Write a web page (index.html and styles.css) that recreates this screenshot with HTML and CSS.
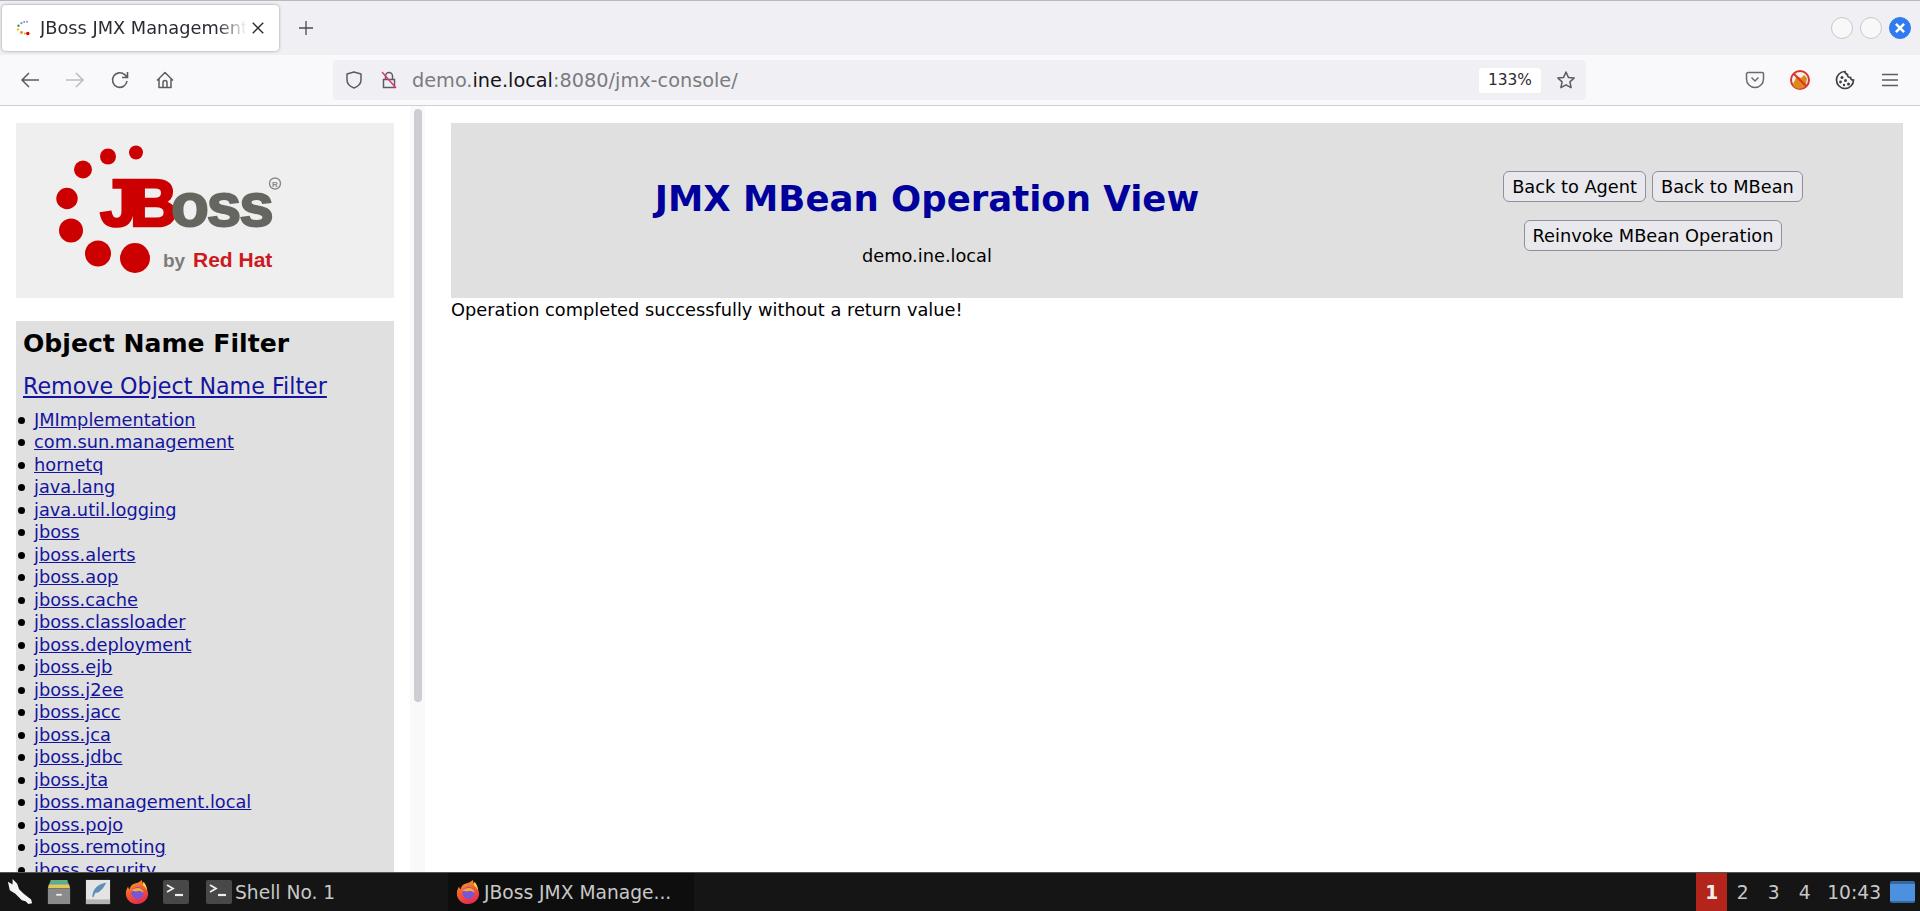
FILE: index.html
```html
<!DOCTYPE html>
<html lang="en">
<head>
<meta charset="utf-8">
<title>JBoss JMX Management Console</title>
<link rel="stylesheet" href="styles.css">
</head>
<body>
<svg class="defs" width="0" height="0" aria-hidden="true">
  <defs>
    <linearGradient id="fxbody" x1="0" y1="0" x2="0.4" y2="1"><stop offset="0" stop-color="#ffb22e"/><stop offset="0.5" stop-color="#f5602b"/><stop offset="1" stop-color="#e8304e"/></linearGradient>
    <symbol id="firefox" viewBox="0 0 28 28">
      <path d="M19 1c1.500 3 1 5 3 7 2.500 2.500 4 5 4 8 0 6-5.500 11-12 11S2 22 2 15.500c0-3 1-5.500 2.500-7.500 0 1.500.5 2.500 1.500 3 .5-3 2.500-5 5-6 2.500-.5 5-1 8-4z" fill="url(#fxbody)"/>
      <circle cx="14.500" cy="15" r="6.500" fill="#7a55d6"/>
      <path d="M8 13c2-3 6-4 9-3 2.500 1 4 3 4 5-2-2-4-2.500-6-2-2 .5-3 .5-4.500 0z" fill="#ffa52e"/>
      <path d="M21 3c2 2 4 6 4 10-1.500-3-3-5-5-6.500z" fill="#ffd53a"/>
    </symbol>
    <symbol id="terminal" viewBox="0 0 26 24">
      <rect x="0" y="0" width="26" height="24" rx="2" fill="#484848"/>
      <path d="M4 5l6 3.500-6 3.500" stroke="#eee" stroke-width="1.800" fill="none"/>
      <path d="M12 15h8" stroke="#eee" stroke-width="2.200"/>
    </symbol>
  </defs>
</svg>
<div class="tabbar">
  <div class="tab">
    <svg class="favicon" viewBox="0 0 16 16"><circle cx="12" cy="1.800" r="1" fill="#a67cc9"/><circle cx="9.200" cy="2" r="1" fill="#7f8fd0"/><circle cx="6.500" cy="3.200" r="1.100" fill="#5aa0c8"/><circle cx="3.500" cy="5.800" r="1.200" fill="#3e9a5a"/><circle cx="3" cy="9.500" r="1.300" fill="#ecc820"/><circle cx="6.500" cy="12.500" r="1.400" fill="#e88a20"/><circle cx="9.800" cy="13.500" r="1" fill="#e8a020"/><circle cx="12.800" cy="13.500" r="1.700" fill="#cc0000"/></svg>
    <span class="tab-title">JBoss JMX Management Console</span>
    <svg class="tab-close" viewBox="0 0 12 12"><path d="M1.500 1.500l9 9M10.500 1.500l-9 9" stroke="#2b2a33" stroke-width="1.200" fill="none"/></svg>
  </div>
  <svg class="newtab" viewBox="0 0 16 16"><path d="M8 1v14M1 8h14" stroke="#4a4952" stroke-width="1.300" fill="none"/></svg>
  <div class="winbtns">
    <span class="winbtn"></span>
    <span class="winbtn"></span>
    <span class="winbtn active"><svg viewBox="0 0 12 12"><path d="M2.500 2.500l7 7M9.500 2.500l-7 7" stroke="#fff" stroke-width="2.200" fill="none"/></svg></span>
  </div>
</div>
<div class="toolbar">
  <svg class="tbicon first" viewBox="0 0 20 20"><path d="M19 10H2M9 3l-7 7 7 7" stroke="#5b5b63" stroke-width="1.500" fill="none"/></svg>
  <svg class="tbicon" viewBox="0 0 20 20"><path d="M1 10h17M11 3l7 7-7 7" stroke="#bcbcc2" stroke-width="1.500" fill="none"/></svg>
  <svg class="tbicon" viewBox="0 0 20 20"><path d="M17 11a7.300 7.300 0 1 1-2.300-6.300L17.500 7.500M17.500 2v5.500H12" stroke="#5b5b63" stroke-width="1.600" fill="none"/></svg>
  <svg class="tbicon" viewBox="0 0 20 20"><path d="M2 10.500L10 2.500l8 8M4 9v8.500h12V9M8 17.500v-5a2 2 0 0 1 4 0v5" stroke="#5b5b63" stroke-width="1.500" fill="none" stroke-linejoin="round"/></svg>
  <div class="urlbar">
    <svg class="urlicon" viewBox="0 0 20 20"><path d="M10 2l7 2v6c0 4-3 6.500-7 8-4-1.500-7-4-7-8V4z" stroke="#5b5b63" stroke-width="1.500" fill="none" stroke-linejoin="round"/></svg>
    <svg class="urlicon lock" viewBox="0 0 20 20"><path d="M6.500 9V6a3.500 3.500 0 0 1 7 0v3M4.500 9.500h11v8h-11z" stroke="#5b5b63" stroke-width="1.500" fill="none"/><path d="M3 2l14 16" stroke="#e5386b" stroke-width="1.500"/></svg>
    <span class="url"><span class="dim">demo.</span>ine.local<span class="dim">:8080/jmx-console/</span></span>
    <span class="zoom">133%</span>
    <svg class="urlicon star" viewBox="0 0 20 20"><path d="M10 2l2.400 5.400 5.800.6-4.300 3.900 1.200 5.800L10 14.800l-5.100 2.900 1.200-5.800L1.800 8l5.800-.6z" stroke="#5b5b63" stroke-width="1.500" fill="none" stroke-linejoin="round"/></svg>
  </div>
  <div class="tbright">
    <svg class="tbicon" viewBox="0 0 20 20"><path d="M3 2.500h14a1.500 1.500 0 0 1 1.500 1.500v5a8.500 8.500 0 0 1-17 0V4A1.500 1.500 0 0 1 3 2.500z" stroke="#6a6a72" stroke-width="1.500" fill="none"/><path d="M6.500 7.500L10 11l3.500-3.500" stroke="#6a6a72" stroke-width="1.500" fill="none"/></svg>
    <svg class="tbicon" viewBox="0 0 20 20"><circle cx="10" cy="10" r="9" fill="#f6efe6" stroke="#d9342b" stroke-width="2"/><path d="M3 14l4-8 4 2 3-3 3 3-1 6-3 4-4 1-5-2z" fill="#dd8a1c"/><path d="M4 4l12 12" stroke="#d9342b" stroke-width="2"/></svg>
    <svg class="tbicon" viewBox="0 0 20 20"><path d="M10 1.500a8.500 8.500 0 1 0 8.500 8.500c-1.500.2-3-.8-3-2.500-2 .2-3.500-1.500-3-3C11 4 10 3 10 1.500z" stroke="#3f3f47" stroke-width="1.700" fill="none"/><circle cx="7" cy="7.500" r="1.500" fill="#3f3f47"/><circle cx="5.500" cy="12" r="1.400" fill="#3f3f47"/><circle cx="10.500" cy="10.500" r="1.500" fill="#3f3f47"/><circle cx="13.500" cy="14" r="1.500" fill="#3f3f47"/><circle cx="9" cy="15" r="1.200" fill="#3f3f47"/></svg>
    <svg class="tbicon" viewBox="0 0 20 20"><path d="M2 4.500h16M2 10h16M2 15.500h16" stroke="#5b5b63" stroke-width="1.500" fill="none"/></svg>
  </div>
</div>
<div class="content">
  <aside class="side">
    <div class="side-inner">
      <div class="logo">
        <svg viewBox="0 0 378 174" class="logo-svg">
          <g fill="#cc0000">
            <circle cx="120" cy="29" r="7"/><circle cx="92" cy="33" r="8"/><circle cx="67" cy="46" r="9"/><circle cx="51" cy="75" r="10.700"/><circle cx="55" cy="107" r="12"/><circle cx="82" cy="130" r="13"/><circle cx="119" cy="134.500" r="15"/>
          </g>
          <text x="84" y="102" class="logo-j">JB</text>
          <text x="155" y="102" class="logo-oss">oss</text>
          <circle cx="259" cy="60" r="5.500" fill="none" stroke="#8a8a86" stroke-width="1.400"/>
          <text x="259" y="63" class="logo-r">R</text>
          <text x="147" y="143" class="logo-by">by</text>
          <text x="177" y="143" class="logo-rh">Red Hat</text>
        </svg>
      </div>
      <div class="filter">
        <h2>Object Name Filter</h2>
        <p class="remove"><a href="#">Remove Object Name Filter</a></p>
        <ul>
          <li><a href="#">JMImplementation</a></li>
          <li><a href="#">com.sun.management</a></li>
          <li><a href="#">hornetq</a></li>
          <li><a href="#">java.lang</a></li>
          <li><a href="#">java.util.logging</a></li>
          <li><a href="#">jboss</a></li>
          <li><a href="#">jboss.alerts</a></li>
          <li><a href="#">jboss.aop</a></li>
          <li><a href="#">jboss.cache</a></li>
          <li><a href="#">jboss.classloader</a></li>
          <li><a href="#">jboss.deployment</a></li>
          <li><a href="#">jboss.ejb</a></li>
          <li><a href="#">jboss.j2ee</a></li>
          <li><a href="#">jboss.jacc</a></li>
          <li><a href="#">jboss.jca</a></li>
          <li><a href="#">jboss.jdbc</a></li>
          <li><a href="#">jboss.jta</a></li>
          <li><a href="#">jboss.management.local</a></li>
          <li><a href="#">jboss.pojo</a></li>
          <li><a href="#">jboss.remoting</a></li>
          <li><a href="#">jboss.security</a></li>
        </ul>
      </div>
    </div>
    <div class="scrolltrack"><div class="scrollthumb"></div></div>
  </aside>
  <main class="main">
    <div class="header">
      <div class="head-title">
        <h1>JMX MBean Operation View</h1>
        <p>demo.ine.local</p>
      </div>
      <div class="head-actions">
        <div class="btnrow"><button>Back to Agent</button><button>Back to MBean</button></div>
        <div class="btnrow"><button>Reinvoke MBean Operation</button></div>
      </div>
    </div>
    <p class="result">Operation completed successfully without a return value!</p>
  </main>
</div>
<div class="taskbar">
  <svg class="tk first" viewBox="0 0 28 28"><path d="M1 3l5 3V0l5 5 2 6 5 5 8 6 1 4-4 1-3-3-4-1-7-7-6-4z" fill="#f4f4f4"/></svg>
  <svg class="tk" viewBox="0 0 28 28"><path d="M5 1h18l1 4H4z" fill="#5fb36a"/><path d="M4 4h20l1 3H3z" fill="#4f9fd8"/><path d="M3 6h22l1 4H2z" fill="#e6c84a"/><path d="M2 10h24v17H2z" fill="#8a8a8a"/><path d="M11 16h6v2h-6z" fill="#eee"/></svg>
  <svg class="tk" viewBox="0 0 28 28"><path d="M1 1h26v26H1z" fill="#e4e4e4"/><path d="M1 22h26v5H1z" fill="#b4b4b4"/><path d="M8 19c0-8 6-14 15-15-2 3-3 6-6 8-1 2-4 3-6 3l-2 5z" fill="#5d8fb8"/></svg>
  <svg class="tk"><use href="#firefox"/></svg>
  <svg class="tk term"><use href="#terminal"/></svg>
  <div class="task shell"><svg class="tk term"><use href="#terminal"/></svg><span>Shell No. 1</span></div>
  <div class="task browser"><svg class="tk"><use href="#firefox"/></svg><span>JBoss JMX Manage...</span></div>
  <div class="tray">
    <span class="ws on">1</span><span class="ws">2</span><span class="ws">3</span><span class="ws">4</span>
    <span class="clock">10:43</span>
    <span class="desk"></span>
  </div>
</div>
</body>
</html>
```

FILE: styles.css
```css
* { box-sizing: border-box; }
html, body { margin: 0; height: 911px; overflow: hidden; }
body { display: flex; flex-direction: column; background: #fff; font-family: "DejaVu Sans", sans-serif; color: #000; }
.defs { position: absolute; }

.tabbar { height: 55px; flex: none; display: flex; align-items: center; background: #f0f0f4; border-top: 1px solid #b8b8bc; padding-left: 2px; }
.tab { width: 277px; height: 46px; background: #fff; border-radius: 4px; box-shadow: 0 0 3px rgba(0,0,0,.4); display: flex; align-items: center; padding: 0 14px 0 13px; font: 17.770px "DejaVu Sans", sans-serif; color: #2b2a33; }
.favicon { width: 16px; height: 16px; flex: none; margin-right: 9px; }
.tab-title { flex: 1; overflow: hidden; white-space: nowrap; -webkit-mask-image: linear-gradient(to left, transparent 4px, #000 34px); mask-image: linear-gradient(to left, transparent 4px, #000 34px); }
.tab-close { width: 14px; height: 14px; flex: none; }
.newtab { width: 16px; height: 16px; margin-left: 19px; }
.winbtns { margin-left: auto; display: flex; gap: 7px; padding-right: 9px; }
.winbtn { width: 22px; height: 22px; border-radius: 50%; background: #f8f8f8; border: 1px solid #c8c8c8; display: flex; align-items: center; justify-content: center; }
.winbtn.active { background: #2f7cf0; border-color: #2f7cf0; }
.winbtn svg { width: 14px; height: 14px; }

.toolbar { height: 51px; flex: none; display: flex; align-items: center; background: #f9f9fb; border-bottom: 1px solid #cfcfd4; }
.tbicon { width: 20px; height: 20px; flex: none; margin-right: 25px; }
.tbicon.first { margin-left: 20px; }
.urlbar { margin-left: 133px; width: 1253px; height: 40px; background: #f0f0f4; border-radius: 4px; display: flex; align-items: center; padding-left: 11px; font: 19.300px "DejaVu Sans", sans-serif; color: #15141a; }
.urlicon { width: 20px; height: 20px; flex: none; }
.urlicon.lock { margin-left: 15px; margin-right: 13px; }
.url { flex: 1; white-space: nowrap; }
.dim { color: #7b7b80; }
.zoom { width: 62px; height: 25px; background: #fff; border-radius: 3px; display: flex; align-items: center; justify-content: center; font-size: 15.400px; margin-right: 15px; color: #2b2a33; }
.urlicon.star { margin-right: 10px; }
.tbright { margin-left: auto; display: flex; align-items: center; }
.tbright .tbicon:last-child { margin-right: 20px; }

.content { flex: 1; min-height: 0; display: flex; overflow: hidden; }
.side { width: 425px; flex: none; display: flex; overflow: hidden; }
.side-inner { width: 410px; padding: 17px 16px 0; }
.logo { height: 175px; background: #efefef; }
.logo-svg { display: block; width: 100%; height: 100%; }
.logo-j { font: 700 66px "Liberation Sans", sans-serif; fill: #cc0000; stroke: #cc0000; stroke-width: 2.500px; letter-spacing: -7px; }
.logo-oss { font: 700 62px "Liberation Sans", sans-serif; fill: #666660; stroke: #666660; stroke-width: 2px; letter-spacing: -2px; }
.logo-r { font: 700 8px "Liberation Sans", sans-serif; fill: #8a8a86; text-anchor: middle; }
.logo-by { font: 700 19px "Liberation Sans", sans-serif; fill: #7c7c7c; }
.logo-rh { font: 700 21px "Liberation Sans", sans-serif; fill: #cc1a20; }
.filter { margin-top: 23px; background: #e0e0e0; padding: 7px 0 0 0; height: 700px; }
.filter h2 { margin: 0 0 0 7px; font-size: 25.100px; line-height: 32px; font-weight: 700; }
.remove { margin: 12px 0 0 7px; font-size: 22.200px; line-height: 28px; }
a { color: #14149e; }
.filter ul { margin: 8.500px 0 0 0; padding: 0 0 0 18px; list-style: none; font-size: 17.770px; line-height: 22.500px; }
.filter li::before { content: ""; display: inline-block; width: 7px; height: 7px; border-radius: 50%; background: #000; margin: 0 8.800px 0 -15.800px; vertical-align: 2px; }

.scrolltrack { width: 15px; background: #f9f9fb; display: flex; justify-content: center; padding-top: 3px; }
.scrollthumb { width: 8px; height: 593px; background: #cdcdd2; border-radius: 4px; }

.main { flex: 1; min-width: 0; padding: 17px 17px 0 26px; }
.header { height: 175px; background: #e0e0e0; display: grid; grid-template-columns: 952px 1fr; }
.head-title { text-align: center; padding-top: 54px; }
.head-title h1 { margin: 0; font-size: 35.500px; line-height: 44px; color: #00009c; }
.head-title p { margin: 24px 0 0; font-size: 17.770px; line-height: 22px; }
.head-actions { display: flex; flex-direction: column; align-items: center; padding-top: 48px; gap: 18px; }
.btnrow { display: flex; gap: 6px; }
button { font: 17.770px "DejaVu Sans", sans-serif; color: #000; height: 31px; padding: 0 8px; background: #e9e9ed; border: 1px solid #8f8f9d; border-radius: 6px; }
.result { margin: 1px 0 0; font-size: 17.770px; line-height: 22px; }

.taskbar { height: 39px; flex: none; display: flex; align-items: center; background: #151515; border-top: 1px solid #555; color: #c8c8c8; font: 18.670px "DejaVu Sans", sans-serif; white-space: nowrap; }
.tk { width: 26px; height: 26px; flex: none; margin-right: 13px; }
.tk.first { margin-left: 7px; }
.tk.term { height: 24px; }
.task { display: flex; align-items: center; height: 38px; }
.task .tk { margin-right: 3px; }
.shell { width: 246px; padding-left: 4px; }
.browser { width: 246px; background: #0e0e0e; padding-left: 7px; }
.tray { margin-left: auto; display: flex; align-items: center; height: 100%; }
.ws { width: 31px; height: 100%; display: flex; align-items: center; justify-content: center; }
.ws.on { background: #b3241b; color: #eee; font-weight: 700; }
.clock { margin-left: 7px; }
.desk { width: 25px; height: 22px; margin: 0 5px 0 9px; background: #4d90e0; border-top: 3px solid #35689f; border-bottom: 2px solid #35689f; border-radius: 2px; }
```
